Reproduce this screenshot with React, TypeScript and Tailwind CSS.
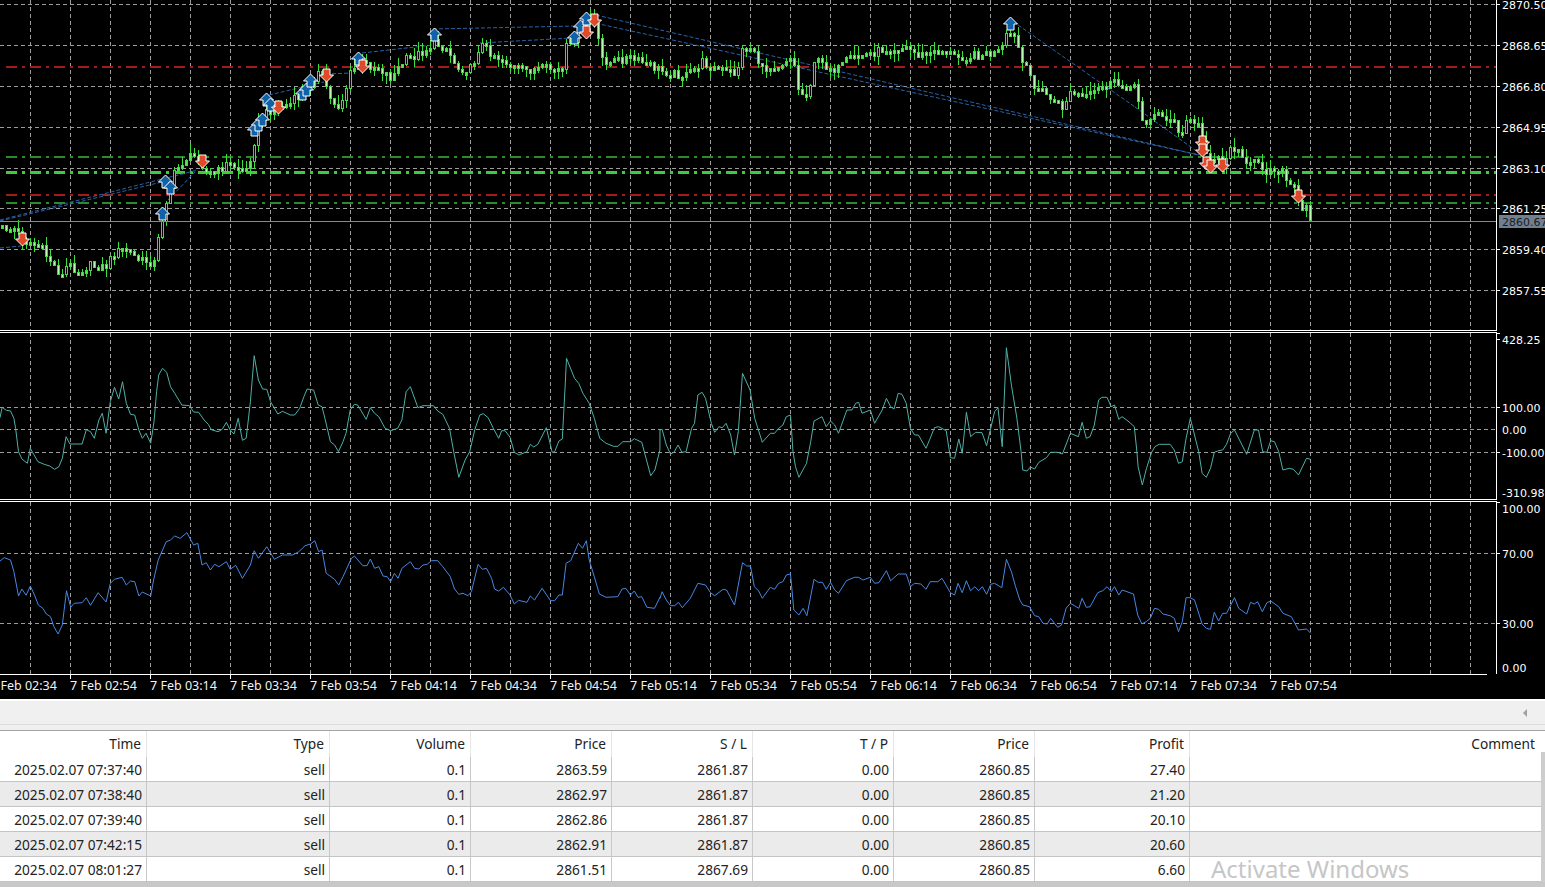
import React from "react";

const L = (a: number[]) => pairs(a).map(([x, y]) => [x / 2.376, y] as [number, number]);
const R = (a: number[]) => pairs(a).map(([x, y]) => [660 + x / 2.376, y] as [number, number]);
function pairs(a: number[]) {
  const o: [number, number][] = [];
  for (let i = 0; i < a.length; i += 2) o.push([a[i], a[i + 1]]);
  return o;
}

const cciL = [0,248,5,217,15,226,25,228,33,250,37,280,44,350,52,372,65,385,72,340,80,358,90,380,105,388,118,393,130,403,140,395,148,370,157,305,166,327,195,327,205,284,215,290,224,310,235,255,243,235,252,295,262,200,272,157,282,192,291,140,300,205,310,238,320,240,330,285,338,310,347,295,358,325,366,260,372,170,377,120,386,100,396,112,405,155,415,175,432,210,450,212,460,231,472,232,485,255,495,268,502,284,518,290,528,283,538,262,547,285,556,297,566,250,576,316,585,310,595,200,604,62,614,135,624,162,634,163,643,200,660,237,671,229,690,240,700,240,712,220,722,185,730,162,745,165,756,210,765,215,772,250,785,320,795,330,804,350,815,320,822,295,832,225,842,208,850,210,870,253,880,218,890,235,900,245,915,280,928,287,945,280,955,255,965,170,975,155,993,218,1005,212,1015,212,1030,212,1040,228,1052,238,1068,280,1078,350,1090,427,1105,375,1116,350,1128,285,1140,240,1148,236,1160,248,1172,280,1185,310,1192,287,1200,287,1212,307,1222,352,1233,360,1252,350,1260,328,1268,336,1278,328,1298,278,1312,352,1318,350,1328,318,1336,312,1343,150,1346,70,1365,130,1375,145,1385,175,1400,205,1412,250,1425,310,1440,325,1458,334,1468,334,1480,320,1498,320,1507,311,1525,322,1535,370,1546,422,1556,405,1568,345];
const cciR = [0,285,5,283,15,330,25,357,33,352,43,330,52,352,62,350,75,280,82,265,90,180,100,172,108,190,122,265,130,292,140,275,148,278,157,265,168,300,177,360,186,290,196,115,214,165,225,250,243,322,262,295,272,295,282,280,292,270,300,245,310,240,316,350,322,395,330,427,348,385,358,320,366,258,385,245,395,275,405,258,415,270,424,295,444,225,456,225,465,205,472,202,480,235,500,225,510,265,528,225,538,190,548,215,556,222,566,175,575,178,585,205,595,280,605,300,614,300,632,340,642,310,652,278,662,275,680,287,690,368,700,370,710,312,718,355,728,232,738,305,750,292,765,293,776,332,795,230,803,218,813,335,823,38,835,150,848,250,858,350,862,405,872,408,880,396,890,402,900,382,918,368,928,352,945,352,956,357,975,295,994,305,1003,262,1013,310,1022,305,1032,270,1042,195,1050,187,1062,187,1072,215,1080,210,1090,253,1098,245,1112,258,1127,275,1133,350,1136,395,1146,450,1156,400,1168,352,1176,335,1186,328,1212,328,1222,345,1232,385,1241,380,1250,310,1260,250,1270,300,1280,350,1288,415,1298,427,1308,400,1317,352,1327,347,1337,345,1346,328,1356,295,1365,285,1394,358,1412,285,1422,285,1432,350,1442,352,1451,317,1460,320,1470,350,1480,405,1495,400,1505,403,1517,420,1536,370,1546,373];
const rsiL = [0,123,10,113,25,120,33,155,44,228,52,207,62,226,72,198,82,225,91,255,102,265,110,282,120,290,128,320,138,342,148,315,158,212,168,262,176,250,195,248,205,233,215,256,233,218,252,246,262,190,272,178,290,172,300,195,310,183,320,185,330,228,338,216,358,228,365,180,376,120,395,65,405,60,415,48,428,55,444,38,460,75,470,70,480,135,490,128,500,150,510,133,520,140,538,125,547,148,560,136,576,175,595,135,604,92,614,115,634,80,652,118,671,105,695,105,710,95,725,77,738,72,748,62,757,95,765,90,775,160,795,178,805,195,815,170,835,115,842,108,862,137,872,137,880,117,890,145,900,140,910,168,920,170,928,185,937,160,946,175,955,145,975,125,985,145,995,147,1005,135,1015,133,1025,122,1040,122,1052,140,1070,170,1080,207,1090,223,1100,220,1112,227,1120,215,1136,133,1146,148,1156,145,1168,175,1175,207,1185,213,1196,202,1212,225,1222,252,1232,241,1252,247,1260,228,1270,240,1288,205,1308,242,1318,242,1328,225,1336,225,1345,130,1356,122,1374,70,1384,85,1393,62,1400,120,1412,170,1424,222,1440,232,1468,230,1478,207,1487,205,1498,225,1507,213,1516,232,1525,230,1537,262,1555,265,1568,232];
const rsiR = [0,145,5,125,15,150,25,167,35,167,44,157,53,173,72,145,90,100,108,105,120,128,130,137,150,118,158,120,177,165,196,38,206,48,215,48,224,110,234,122,243,145,262,112,272,118,282,100,292,95,300,75,310,72,318,180,330,195,340,175,349,197,366,88,376,97,386,97,395,118,405,97,415,120,424,130,443,92,462,82,472,82,482,90,500,82,510,100,520,98,538,62,548,92,566,72,585,72,595,110,605,100,620,102,632,118,642,95,660,95,670,85,690,128,700,135,708,100,718,128,728,92,738,122,748,110,757,122,766,110,776,133,786,103,795,100,812,113,823,28,835,65,845,110,855,150,862,165,878,170,890,197,900,200,910,220,920,222,928,205,945,232,954,225,965,175,975,160,995,175,1003,145,1013,172,1022,170,1040,128,1052,122,1062,110,1072,125,1080,110,1090,135,1098,120,1125,132,1135,195,1145,222,1155,215,1165,205,1175,175,1185,178,1195,192,1212,197,1222,205,1232,245,1241,215,1250,143,1260,143,1270,150,1288,222,1298,235,1308,238,1317,187,1327,213,1337,190,1346,190,1365,143,1375,175,1394,192,1403,157,1412,162,1420,155,1431,185,1442,158,1451,153,1470,170,1480,190,1500,200,1517,240,1536,237,1546,250];

const cciPts = [...L(cciL), ...R(cciR)].map(([x, y]) => `${x.toFixed(1)},${(335 + y / 3).toFixed(1)}`).join(" ");
const rsiPts = [
  ...L(rsiL).map(([x, y]) => [x, 520 + y / 3]),
  ...R(rsiR).map(([x, y]) => [x, 550 + y / 3]),
].map(([x, y]) => `${x.toFixed(1)},${y.toFixed(1)}`).join(" ");

const path: [number, number][] = [[0,228],[15,228],[21,238],[38,245],[44,252],[55,267],[63,277],[67,263],[78,270],[90,265],[105,267],[114,253],[126,248],[139,260],[154,262],[159,233],[166,200],[175,170],[187,157],[198,157],[206,172],[215,173],[227,163],[246,170],[253,147],[257,123],[269,110],[290,103],[307,90],[316,73],[324,75],[328,97],[339,107],[345,90],[351,70],[362,63],[379,67],[391,78],[404,60],[421,52],[433,43],[446,47],[457,68],[471,68],[480,43],[492,53],[511,65],[522,70],[547,68],[562,70],[566,47],[581,30],[589,13],[596,27],[600,57],[610,62],[627,57],[644,63],[660,70],[670,73],[687,75],[702,62],[715,68],[736,73],[742,50],[753,47],[761,70],[782,62],[793,53],[796,88],[807,97],[814,60],[837,70],[847,60],[862,55],[887,48],[908,47],[917,55],[946,50],[955,57],[997,53],[1005,43],[1007,30],[1016,40],[1022,63],[1035,85],[1049,97],[1062,107],[1070,93],[1087,97],[1100,87],[1112,83],[1136,88],[1140,113],[1144,122],[1159,113],[1173,120],[1180,140],[1186,120],[1197,122],[1203,143],[1211,160],[1218,157],[1222,163],[1232,147],[1239,145],[1245,167],[1258,160],[1266,170],[1279,167],[1287,182],[1296,190],[1300,213],[1306,207],[1311,220]];

function mid(x: number) {
  for (let i = 1; i < path.length; i++) {
    if (x <= path[i][0]) {
      const [a, b] = path[i - 1];
      const [c, d] = path[i];
      return b + ((d - b) * (x - a)) / (c - a || 1);
    }
  }
  return path[path.length - 1][1];
}
const rnd = (i: number, k: number) => {
  const v = Math.sin(i * 12.9898 + k * 78.233) * 43758.5453;
  return v - Math.floor(v);
};
type C = { x: number; t: number; b: number; hi: number; lo: number; up: boolean };
const candles: C[] = [];
let prev = mid(-2);
for (let x = 2, i = 0; x <= 1310; x += 4, i++) {
  let c = mid(x) + (rnd(i, 1) - 0.5) * 9;
  if (x === 1310) c = 220;
  const t = Math.round(Math.min(prev, c));
  let b = Math.round(Math.max(prev, c));
  if (b - t < 3) b = t + 3;
  const hi = t - Math.round(rnd(i, 2) ** 1.5 * 9);
  const lo = Math.min(b + Math.round(rnd(i, 3) ** 1.5 * 9), x > 1290 ? 220 : 999);
  candles.push({ x, t, b, hi, lo, up: c < prev });
  prev = c;
}

const ups: [number, number][] = [[162,214],[165,182],[170,188],[254,130],[258,125],[262,120],[266,100],[270,105],[302,94],[306,90],[310,81],[358,59],[434,35],[574,38],[580,27],[586,19],[1010,24]];
const downs: [number, number][] = [[22,239],[202,161],[278,107],[326,75],[362,66],[586,32],[594,20],[1202,142],[1202,150],[1206,163],[1210,166],[1222,165],[1298,196]];
const trends = [
  [0,220,198,170],[0,221,166,181],[0,248,21,246],[168,200,195,172],[262,115,278,115],[269,95,324,82],[326,74,352,73],[362,53,433,45],[433,29,576,26],[480,43,572,38],[596,15,1199,155],[590,22,1199,155],[1018,25,1135,107],[1135,107,1195,150],
];

const vGrid: number[] = [];
for (let x = 30; x <= 1470; x += 40) vGrid.push(x);
const times = ["02:34","02:54","03:14","03:34","03:54","04:14","04:34","04:54","05:14","05:34","05:54","06:14","06:34","06:54","07:14","07:34","07:54"];

const axisFont = { fontFamily: "'DejaVu Sans', sans-serif", fontSize: 11 };

function Grid({ top, h, rows }: { top: number; h: number; rows: number[] }) {
  return (
    <g stroke="#9c9c9c" strokeDasharray="4 3" shapeRendering="crispEdges">
      {vGrid.map((x) => <line key={x} x1={x + 0.5} x2={x + 0.5} y1={top} y2={top + h} />)}
      {rows.map((y) => <line key={y} x1={0} x2={1496} y1={y + 0.5} y2={y + 0.5} />)}
    </g>
  );
}
function Axis({ top, h, labels }: { top: number; h: number; labels: [string, number, boolean?][] }) {
  return (
    <g>
      <rect x={1496} y={top} width={1} height={h} fill="#fff" shapeRendering="crispEdges" />
      {labels.map(([t, y, noTick]) => (
        <g key={t + y}>
          {!noTick && <rect x={1497} y={y} width={3} height={1} fill="#fff" shapeRendering="crispEdges" />}
          <text x={1502} y={y + 4.5} fill="#ffffff" style={axisFont}>{t}</text>
        </g>
      ))}
    </g>
  );
}
function Level({ y, color, w = 1 }: { y: number; color: string; w?: number }) {
  return <line x1={6} x2={1496} y1={y} y2={y} stroke={color} strokeWidth={w} strokeDasharray="11 5 3 5" shapeRendering="crispEdges" />;
}
function Marker({ x, y, up }: { x: number; y: number; up: boolean }) {
  return (
    <path
      transform={`translate(${x} ${y}) scale(1 ${up ? 1 : -1})`}
      d="M0 -7 L7 0 L3.5 0 L3.5 6 L-3.5 6 L-3.5 0 L-7 0 Z"
      fill={up ? "#0f62a8" : "#e0492a"}
      stroke="#fff"
      strokeWidth={1}
    />
  );
}

const widths = ["w-[147px]","w-[183px]","w-[141px]","w-[141px]","w-[141px]","w-[141px]","w-[141px]","w-[155px]","w-[351px]"];
const header = ["Time","Type","Volume","Price","S / L","T / P","Price","Profit","Comment"];
const rows = [
  ["2025.02.07 07:37:40","sell","0.1","2863.59","2861.87","0.00","2860.85","27.40",""],
  ["2025.02.07 07:38:40","sell","0.1","2862.97","2861.87","0.00","2860.85","21.20",""],
  ["2025.02.07 07:39:40","sell","0.1","2862.86","2861.87","0.00","2860.85","20.10",""],
  ["2025.02.07 07:42:15","sell","0.1","2862.91","2861.87","0.00","2860.85","20.60",""],
  ["2025.02.07 08:01:27","sell","0.1","2861.51","2867.69","0.00","2860.85","6.60",""],
];

function Separator() {
  return <div className="h-[3px] w-[1497px] border-y border-white shrink-0" />;
}

export default function App() {
  return (
    <div className="relative flex h-[887px] w-[1545px] flex-col overflow-hidden bg-[#f0f0f0] font-['Noto_Sans',sans-serif] text-[#222]">
      <div className="flex h-[699px] shrink-0 flex-col bg-black">
        <svg width={1545} height={330} viewBox="0 0 1545 330" className="block shrink-0">
          <Grid top={0} h={330} rows={[4,45,86,127,168,208,249,290]} />
          <Level y={67} color="#a01c1c" w={2} />
          <Level y={195} color="#a01c1c" w={2} />
          <Level y={157} color="#2a8a2c" w={2} />
          <Level y={203} color="#2a8a2c" w={2} />
          <Level y={172} color="#3ccc3c" w={3} />
          <g stroke="#2a62a8" strokeDasharray="4 2" fill="none">
            {trends.map((t, i) => <line key={i} x1={t[0]} y1={t[1]} x2={t[2]} y2={t[3]} />)}
          </g>
          <g shapeRendering="crispEdges">
            {candles.map((c) => (
              <g key={c.x}>
                <rect x={c.x} y={c.hi} width={1} height={c.lo - c.hi} fill="#3ce03c" />
                <rect x={c.x - 1} y={c.t} width={3} height={c.b - c.t + 1} fill="#3ce03c" />
                <rect x={c.x} y={c.t + 1} width={1} height={c.b - c.t - 1} fill={c.up ? (c.b - c.t >= 8 ? "#000" : "#5fe85f") : "#b8f8b0"} />
              </g>
            ))}
          </g>
          {ups.map(([x, y]) => <Marker key={`u${x}${y}`} x={x + 0.5} y={y} up />)}
          {downs.map(([x, y]) => <Marker key={`d${x}${y}`} x={x + 0.5} y={y} up={false} />)}
          <line x1={0} x2={1497} y1={221.5} y2={221.5} stroke="#808a96" shapeRendering="crispEdges" />
          <Axis top={0} h={330} labels={[["2870.50",4],["2868.65",45],["2866.80",86],["2864.95",127],["2863.10",168],["2861.25",208],["2859.40",249],["2857.55",290]]} />
          <rect x={1499} y={215} width={46} height={13} fill="#708090" />
          <text x={1502} y={226} fill="#1c1c1c" style={axisFont}>2860.67</text>
        </svg>
        <Separator />
        <svg width={1545} height={166} viewBox="0 333 1545 166" className="block shrink-0">
          <Grid top={333} h={166} rows={[407,429,452]} />
          <polyline points={cciPts} fill="none" stroke="#4fb0a8" strokeWidth={1} />
          <Axis top={333} h={166} labels={[["428.25",339],["100.00",407],["0.00",429,true],["-100.00",452],["-310.98",492,true]]} />
          <rect x={1497} y={333} width={3} height={1} fill="#fff" />
        </svg>
        <Separator />
        <svg width={1545} height={172} viewBox="0 502 1545 172" className="block shrink-0">
          <Grid top={502} h={172} rows={[553,623]} />
          <polyline points={rsiPts} fill="none" stroke="#4687e4" strokeWidth={1} />
          <Axis top={502} h={172} labels={[["100.00",508,true],["70.00",553],["30.00",623],["0.00",667,true]]} />
          <rect x={1497} y={502} width={3} height={1} fill="#fff" />
        </svg>
        <div className="h-[25px] shrink-0 overflow-hidden">
          <div className="flex h-full w-[1497px] -translate-x-[10px] border-t border-white">
            {times.map((t) => (
              <div key={t} className="flex w-[80px] shrink-0 flex-col">
                <div className="h-[4px] w-px bg-white" />
                <span className="-mt-[2px] whitespace-nowrap text-[12.5px] leading-[17px] text-[#f2f2f2]">7 Feb {t}</span>
              </div>
            ))}
          </div>
        </div>
      </div>
      <div className="h-[2px] shrink-0 bg-white" />
      <div className="flex h-[24px] shrink-0 items-center justify-end border-b border-[#dcdcdc] bg-[#f0f0f0] pr-[17px]">
        <svg width={6} height={8} viewBox="0 0 6 8"><path d="M5 0 L1 4 L5 8 Z" fill="#a0a0a0" /></svg>
      </div>
      <div className="h-[5px] shrink-0 bg-[#f0f0f0]" />
      <div className="flex flex-1 flex-col border-t border-[#a4a4a4] bg-white">
        <div className="flex flex-1">
          <div className="w-[1541px]">
            <div className="flex h-[26px] items-center">
              {header.map((h, i) => (
                <div key={i} className={`${widths[i]} flex h-full items-center justify-end border-r border-[#e6e6e6] pr-[5px] text-[13.7px] last:border-r-0 last:pr-[6px]`}>{h}</div>
              ))}
            </div>
            {rows.map((r, ri) => (
              <div key={ri} className={`flex h-[25px] border-b border-[#c4c4c4] ${ri % 2 ? "bg-[#ebebeb]" : "bg-white"}`}>
                {r.map((c, i) => (
                  <div key={i} className={`${widths[i]} flex h-full items-center justify-end border-r border-[#c8c8c8] pr-[4px] pt-[2px] text-[13.7px] last:border-r-0`}>{c}</div>
                ))}
              </div>
            ))}
          </div>
          <div className="flex w-[4px] flex-col pt-[21px]">
            <div className="flex-1 bg-[#cdcdcd]" />
          </div>
        </div>
        <div className="h-[5px] bg-[#c8c8c8]" />
      </div>
      <div className="absolute bottom-[2px] left-[1211px] text-[24px] leading-[32px] text-[#c6c6c6]">Activate Windows</div>
    </div>
  );
}
